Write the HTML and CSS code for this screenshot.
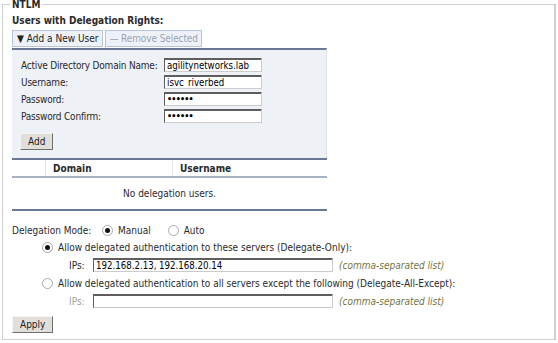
FILE: index.html
```html
<!DOCTYPE html>
<html>
<head>
    <title>NTLM Delegation</title>
    <link rel="stylesheet" href="styles.css">
</head>
<body>
    <fieldset class="ntlm">
        <legend>NTLM</legend>
        <div class="section-title">Users with Delegation Rights:</div>
        <div class="toolbar">
            <button class="tb-btn">&#9660; Add a New User</button>
            <button class="tb-btn disabled">&mdash; Remove Selected</button>
        </div>
        <div class="user-panel">
            <div class="add-form">
                <label>Active Directory Domain Name:</label>
                <input type="text" class="field" value="agilitynetworks.lab">
                <label>Username:</label>
                <input type="text" class="field" value="isvc_riverbed">
                <label>Password:</label>
                <input type="password" class="field" value="secret">
                <label>Password Confirm:</label>
                <input type="password" class="field" value="secret">
            </div>
            <button class="btn">Add</button>
        </div>
        <table class="users">
            <thead>
                <tr>
                    <th class="sel"></th>
                    <th class="dom">Domain</th>
                    <th>Username</th>
                </tr>
            </thead>
            <tbody>
                <tr>
                    <td colspan="3" class="empty">No delegation users.</td>
                </tr>
            </tbody>
        </table>
        <div class="mode-row">
            <span class="mode-label">Delegation Mode:</span>
            <label class="opt"><input type="radio" name="mode" checked> Manual</label>
            <label class="opt"><input type="radio" name="mode"> Auto</label>
        </div>
        <div class="deleg">
            <label class="opt"><input type="radio" name="dtype" checked> Allow delegated authentication to these servers (Delegate-Only):</label>
            <div class="ip-row">
                <span class="ip-label">IPs:</span>
                <input type="text" class="field ip" value="192.168.2.13, 192.168.20.14">
                <span class="hint">(comma-separated list)</span>
            </div>
            <label class="opt"><input type="radio" name="dtype"> Allow delegated authentication to all servers except the following (Delegate-All-Except):</label>
            <div class="ip-row">
                <span class="ip-label off">IPs:</span>
                <input type="text" class="field ip" value="">
                <span class="hint">(comma-separated list)</span>
            </div>
        </div>
        <button class="btn apply">Apply</button>
    </fieldset>
</body>
</html>
```

FILE: styles.css
```css
body {
    margin: 0;
    background: #fff;
    font-family: 'DejaVu Sans Condensed', 'DejaVu Sans', sans-serif;
    font-size: 10px;
    color: #2a2a2a;
}
.ntlm {
    margin: 0 2px;
    padding: 2px 9px 20px 9px;
    border: 1px solid #cfcfcf;
    border-right-width: 2px;
    height: 340px;
    box-sizing: border-box;
}
.ntlm legend {
    padding: 0 2px;
    margin-left: -2px;
    font-weight: bold;
    line-height: 9px;
}
.section-title {
    font-weight: bold;
    margin-top: 4px;
    line-height: 12px;
}
.toolbar {
    display: flex;
    gap: 2px;
    margin-top: 3px;
}
.tb-btn {
    font: inherit;
    height: 17px;
    padding: 0 4px;
    background: #eef2f8;
    border: 1px solid #b7c3d6;
    color: #222;
}
.tb-btn.disabled {
    color: #9aa3b0;
    padding: 0 3px;
    letter-spacing: -0.1px;
}
.user-panel {
    width: 315px;
    box-sizing: border-box;
    margin-top: 1px;
    background: #eef1f6;
    border-top: 2px solid #6b7894;
    border-right: 1px solid #dde2ea;
    padding: 8px 8px 8px 8px;
}
.add-form {
    display: grid;
    grid-template-columns: 143px 98px;
    row-gap: 3px;
    align-items: center;
    padding-left: 1px;
}
.add-form label {
    letter-spacing: -0.2px;
}
.field {
    font: inherit;
    font-size: 9.6px;
    color: #000;
    height: 14px;
    box-sizing: border-box;
    padding: 0 2px;
    border: 1px solid #cbcbcb;
    border-top-color: #5e5e5e;
    border-left-color: #5e5e5e;
    box-shadow: inset 0 1px #5e5e5e;
    background: #fff;
    outline: none;
}
input[type="password"].field {
    font-family: 'DejaVu Sans', sans-serif;
    font-size: 8px;
    font-weight: bold;
    letter-spacing: -0.8px;
}
.btn {
    font: inherit;
    color: #222;
    background: #e2dfda;
    border: 1px solid;
    border-color: #f4f4f4 #6f6f6f #6f6f6f #f4f4f4;
    height: 17px;
    padding: 0 7px;
}
.user-panel .btn {
    margin-top: 10px;
}
.users {
    width: 315px;
    border-collapse: collapse;
}
.users th {
    text-align: left;
    font-weight: bold;
    height: 16px;
    padding: 0 7px;
    border-top: 2px solid #6b7894;
    border-bottom: 2px solid #a7b1c4;
}
.users th.sel {
    width: 33px;
    padding: 0;
    border-right: 1px solid #e2e5ea;
}
.users th.dom {
    width: 112px;
    border-right: 1px solid #e2e5ea;
}
.users td.empty {
    text-align: center;
    height: 31px;
    padding: 0;
    border-bottom: 2px solid #6b7894;
}
.mode-row {
    display: flex;
    align-items: center;
    margin-top: 12px;
    height: 14px;
}
.mode-label {
    width: 90px;
}
.opt {
    display: flex;
    align-items: center;
    gap: 5px;
    margin-right: 17px;
}
input[type="radio"] {
    appearance: none;
    margin: 0;
    width: 11px;
    height: 11px;
    border-radius: 50%;
    border: 1px solid #a9a9a9;
    background: #fff;
    box-sizing: border-box;
    display: grid;
    place-items: center;
}
input[type="radio"]:checked::after {
    content: "";
    width: 5px;
    height: 5px;
    border-radius: 50%;
    background: #111;
}
.deleg {
    padding-left: 30px;
    margin-top: 3px;
}
.deleg .opt {
    height: 14px;
}
.ip-row {
    display: flex;
    align-items: center;
    height: 22px;
    padding-left: 27px;
    gap: 6px;
}
.ip-label {
    width: 18px;
}
.ip-label.off {
    color: #a0a0a0;
}
.field.ip {
    width: 240px;
}
.hint {
    font-style: italic;
    color: #75753f;
}
.btn.apply {
    margin-top: 4px;
}
```
